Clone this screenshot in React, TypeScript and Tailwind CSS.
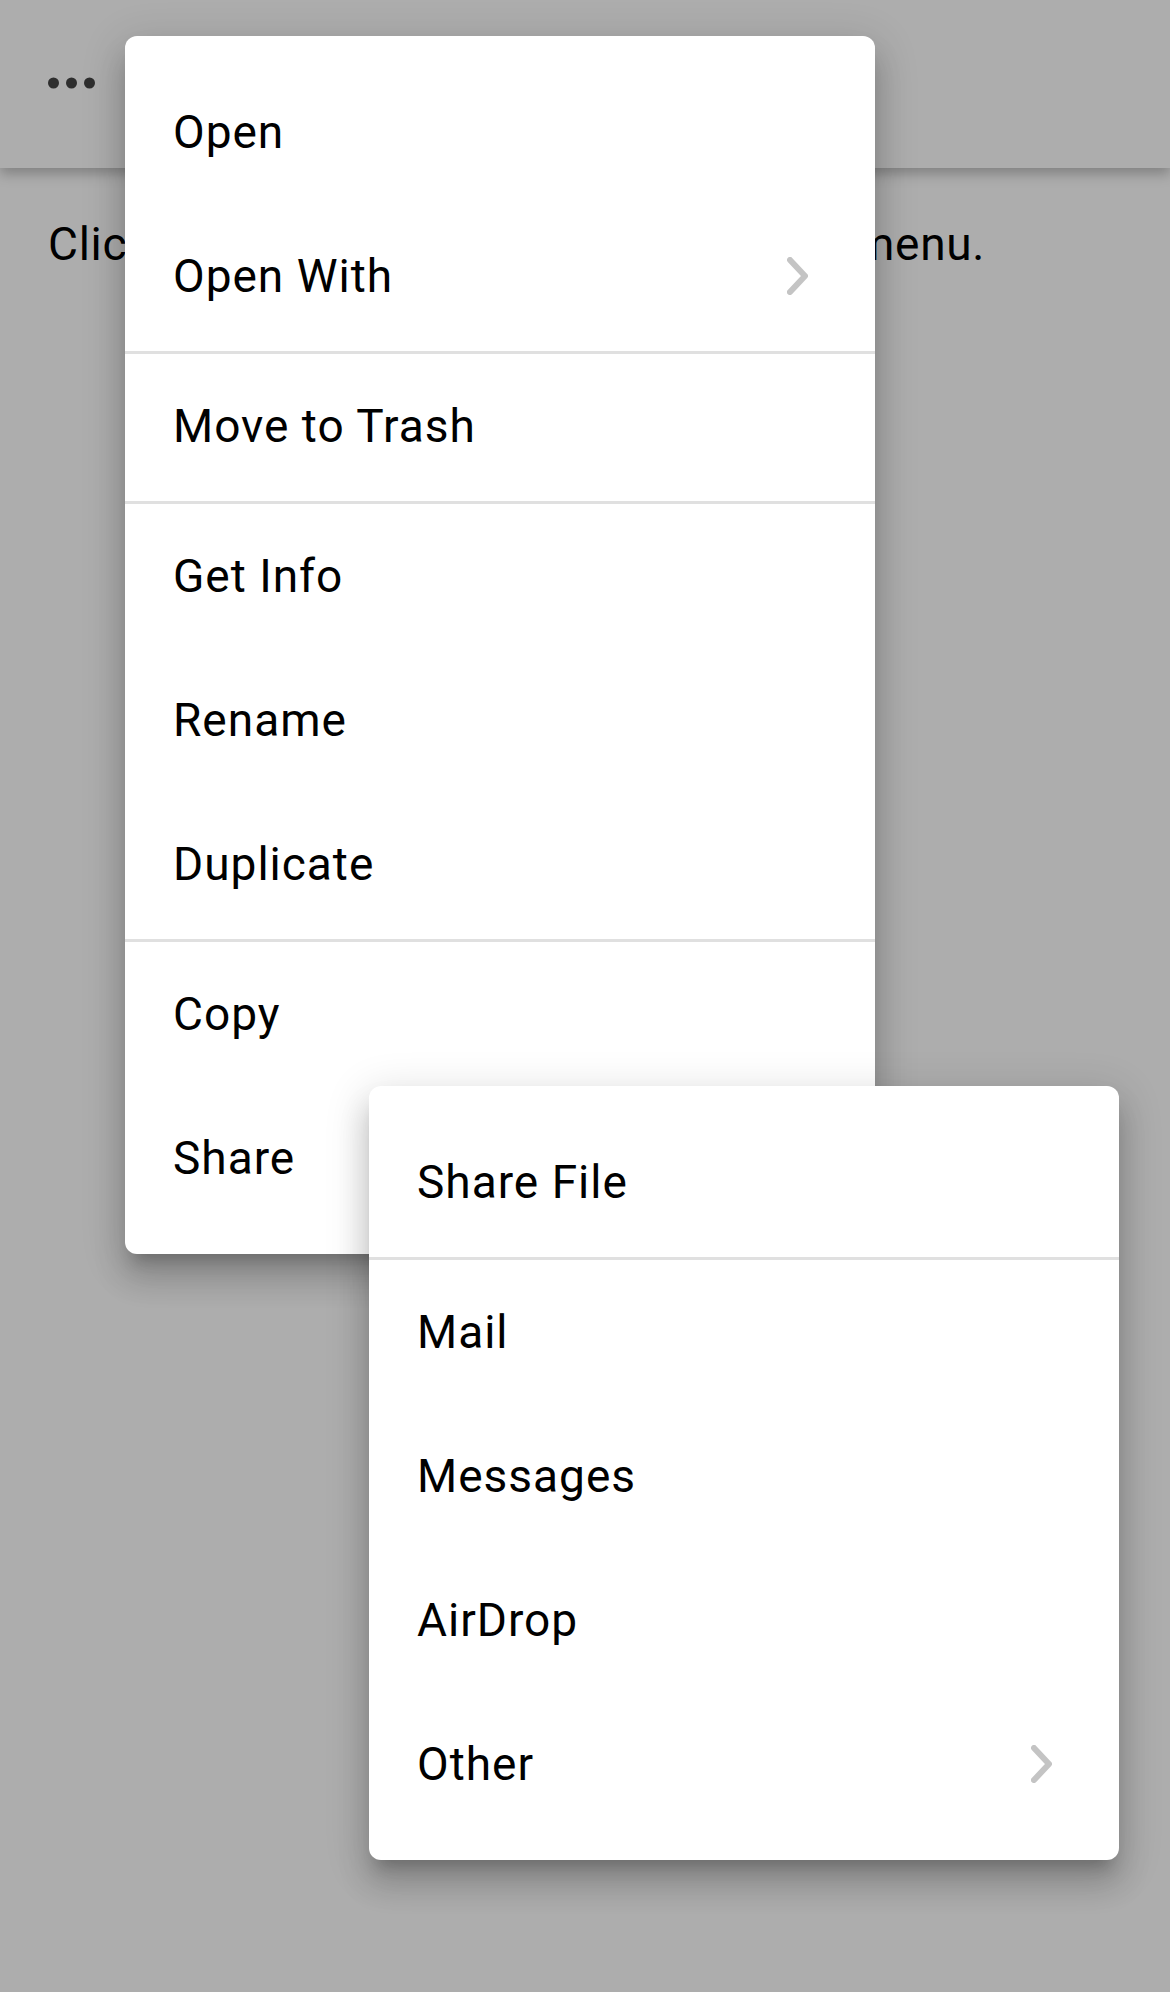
import React from "react";

function Chevron() {
  return (
    <svg width="21" height="38" viewBox="0 0 21 38" fill="none" className="shrink-0">
      <path d="M3 3 L18 19 L3 35" stroke="#c4c4c4" strokeWidth="6" strokeLinecap="round" strokeLinejoin="round" />
    </svg>
  );
}

function Item({ label, sub }: { label: string; sub?: boolean }) {
  return (
    <div className="flex h-[144px] items-center justify-between pl-[48px] pr-[67px]">
      <span className="text-[46px] leading-none tracking-[1px] text-black">{label}</span>
      {sub ? <Chevron /> : null}
    </div>
  );
}

function Sep() {
  return <div className="mt-[3px] h-[3px] bg-[#e0e0e0]" />;
}

const menuShadow =
  "shadow-[0_15px_15px_-9px_rgba(0,0,0,0.2),0_24px_30px_3px_rgba(0,0,0,0.14),0_9px_42px_6px_rgba(0,0,0,0.12)]";

export default function App() {
  return (
    <div
      className="relative h-[1992px] w-full overflow-hidden bg-white"
      style={{ fontFamily: "Roboto, 'Noto Sans', sans-serif" }}
    >
      <header className="flex h-[168px] items-center bg-white pl-[48px] shadow-[0_6px_12px_rgba(0,0,0,0.25)]">
        <svg width="48" height="12" viewBox="0 0 48 12" className="mb-[2px]">
          <circle cx="5.5" cy="6" r="5.5" fill="#444" />
          <circle cx="23.5" cy="6" r="5.5" fill="#444" />
          <circle cx="41.5" cy="6" r="5.5" fill="#444" />
        </svg>
      </header>
      <p className="whitespace-nowrap pl-[48px] pt-[50px] text-[46px] leading-[52px] tracking-[0.7px] text-black">
        Click the more icon above to open the menu.
      </p>

      <div className="absolute inset-0 bg-black/[0.32]" />

      <div className={`absolute left-[125px] top-[36px] w-[750px] rounded-[12px] bg-white pb-[24px] pt-[24px] ${menuShadow}`}>
        <Item label="Open" />
        <Item label="Open With" sub />
        <Sep />
        <Item label="Move to Trash" />
        <Sep />
        <Item label="Get Info" />
        <Item label="Rename" />
        <Item label="Duplicate" />
        <Sep />
        <Item label="Copy" />
        <Item label="Share" />
      </div>

      <div className={`absolute left-[369px] top-[1086px] w-[750px] rounded-[12px] bg-white pb-[24px] pt-[24px] ${menuShadow}`}>
        <Item label="Share File" />
        <Sep />
        <Item label="Mail" />
        <Item label="Messages" />
        <Item label="AirDrop" />
        <Item label="Other" sub />
      </div>
    </div>
  );
}
